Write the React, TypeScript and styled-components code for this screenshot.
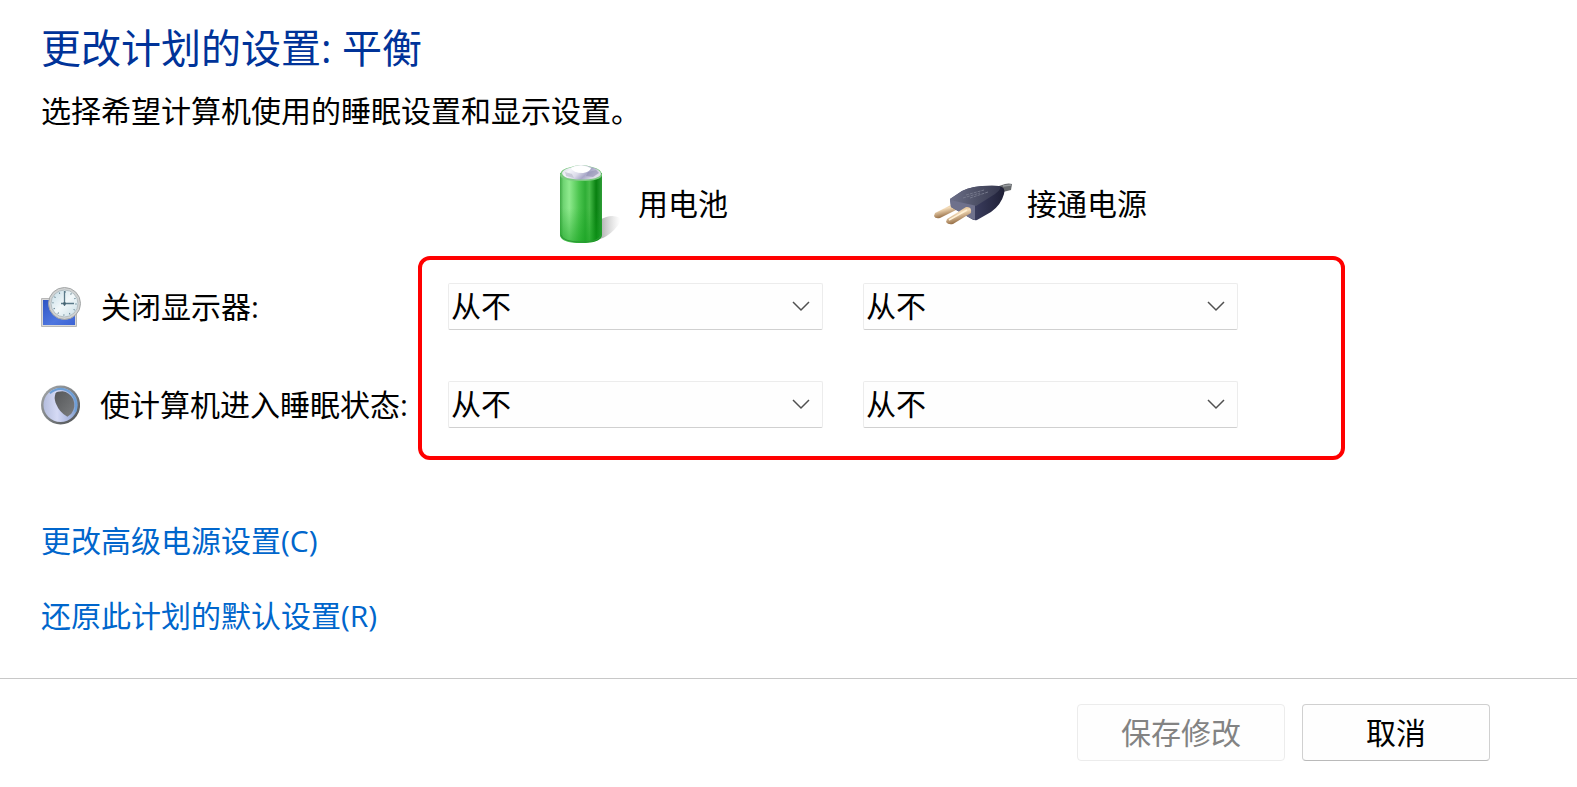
import React from 'react';
import styled, { createGlobalStyle } from 'styled-components';

const GlobalStyle = createGlobalStyle`
  *, *::before, *::after { box-sizing: border-box; }
  body {
    margin: 0;
    background: #ffffff;
    color: #000000;
    font-family: "Open Sans", "Noto Sans CJK SC", sans-serif;
    font-size: 30px;
    line-height: 40px;
  }
`;

const Page = styled.div`
  min-height: 100vh;
  display: flex;
  flex-direction: column;
`;

const Content = styled.main`
  padding: 22px 41px 42px;
  border-bottom: 1px solid #c8c8c8;
`;

const Title = styled.h1`
  margin: 0 0 17px;
  color: #003399;
  font-size: 40px;
  font-weight: 400;
  line-height: 52px;
`;

const Intro = styled.p`
  margin: 0 0 33px;
`;

const PlanGrid = styled.div`
  display: grid;
  grid-template-columns: 367px minmax(0, 375px) minmax(0, 375px);
  grid-template-rows: 68px 47px 47px;
  column-gap: 40px;
  row-gap: 51px;
  align-items: center;
`;

const SourceHeader = styled.div<{ $column: number; $indent: number }>`
  grid-row: 1;
  grid-column: ${(p) => p.$column};
  align-self: start;
  display: flex;
  align-items: center;
  gap: 14px;
  padding-left: ${(p) => p.$indent}px;
  white-space: nowrap;
`;

const RowLabel = styled.div<{ $row: number }>`
  grid-row: ${(p) => p.$row};
  grid-column: 1;
  display: flex;
  align-items: center;
  gap: 20px;
  white-space: nowrap;
`;

const Highlight = styled.div`
  grid-row: 2 / 4;
  grid-column: 2 / 4;
  align-self: stretch;
  margin: -27px -107px -32px -30px;
  border: 4px solid #ff0000;
  border-radius: 12px;
  pointer-events: none;
`;

const SelectBox = styled.div<{ $row: number; $column: number }>`
  grid-row: ${(p) => p.$row};
  grid-column: ${(p) => p.$column};
  position: relative;
  height: 47px;
`;

const Select = styled.select`
  appearance: none;
  width: 100%;
  height: 100%;
  padding: 0 48px 1px 2px;
  border: 1px solid #ececec;
  border-bottom-color: #d0d0d0;
  border-radius: 2px;
  background: #fefefe;
  color: inherit;
  font: inherit;
`;

const Chevron = styled.svg`
  position: absolute;
  right: 13px;
  top: 18px;
  pointer-events: none;
`;

const Links = styled.nav`
  display: flex;
  flex-direction: column;
  align-items: flex-start;
  gap: 35px;
  margin-top: 93px;
`;

const PlanLink = styled.a`
  color: #0066cc;
  text-decoration: none;
`;

const Footer = styled.footer`
  flex: 1;
  display: flex;
  justify-content: flex-end;
  align-items: flex-start;
  gap: 17px;
  padding: 25px 87px 25px 41px;
`;

const Button = styled.button<{ $width: number }>`
  width: ${(p) => p.$width}px;
  height: 57px;
  padding: 0;
  border: 1px solid #d0d0d0;
  border-bottom-color: #bababa;
  border-radius: 4px;
  background: #fefefe;
  color: #000000;
  font: inherit;
  &:disabled {
    border-color: #ececec;
    color: #838383;
  }
`;

const BatteryIcon = () => (
  <svg width="80" height="80" viewBox="0 0 80 80" aria-hidden="true">
    <defs>
      <linearGradient id="bat-body" x1="0" x2="1">
        <stop offset="0" stopColor="#3fa845" />
        <stop offset="0.08" stopColor="#6fd472" />
        <stop offset="0.22" stopColor="#8fea8e" />
        <stop offset="0.45" stopColor="#4cc54f" />
        <stop offset="0.6" stopColor="#2fae36" />
        <stop offset="0.7" stopColor="#48bd4a" />
        <stop offset="0.86" stopColor="#088010" />
        <stop offset="1" stopColor="#2d9d36" />
      </linearGradient>
      <linearGradient id="bat-shade" x1="0" x2="0" y1="0" y2="1">
        <stop offset="0.5" stopColor="#12a01c" stopOpacity="0" />
        <stop offset="1" stopColor="#12a01c" stopOpacity="0.55" />
      </linearGradient>
      <linearGradient id="bat-cap" x1="0" x2="1" y1="0" y2="0.4">
        <stop offset="0" stopColor="#c9cfd6" />
        <stop offset="0.3" stopColor="#f4f4fa" />
        <stop offset="0.55" stopColor="#dcdcea" />
        <stop offset="0.75" stopColor="#a9a8c8" />
        <stop offset="1" stopColor="#dddde8" />
      </linearGradient>
      <linearGradient id="bat-shadow" x1="0" x2="1">
        <stop offset="0" stopColor="#777" stopOpacity="0.6" />
        <stop offset="1" stopColor="#aaa" stopOpacity="0" />
      </linearGradient>
    </defs>
    <path d="M56 56Q67 49 76 54Q78 58 70 66Q63 73 56 75Z" fill="url(#bat-shadow)" />
    <path d="M16 9V71Q17 79 37 79Q57 79 58 71V9Z" fill="url(#bat-body)" />
    <path d="M16 9V71Q17 79 37 79Q57 79 58 71V9Z" fill="url(#bat-shade)" />
    <path d="M17 71Q19 78 37 78Q55 78 57 71" fill="none" stroke="#2c9836" strokeWidth="1" />
    <path d="M16 11Q16 5 27 3Q37 -1 48 3Q58 5 58 11Q57 17 37 17Q17 17 16 11Z" fill="#7ccb80" />
    <path d="M18 9Q19 5 27 3.500Q36 -1 47 3Q56 5 57 10Q55 15.500 37 15.500Q19 15.500 18 9Z" fill="url(#bat-cap)" />
    <path d="M27 4Q37 -1 47 4Q46 8 39 9Q29 9 27 4Z" fill="#ffffff" />
    <path d="M44 8L52 6L55 9L49 13L42 12Z" fill="#8f8db2" opacity="0.6" />
    <path d="M21 8L28 10L30 14L22 12Z" fill="#b6b8c8" opacity="0.6" />
  </svg>
);

const PlugIcon = () => (
  <svg width="80" height="80" viewBox="0 0 80 80" aria-hidden="true">
    <defs>
      <linearGradient id="plug-top" x1="0" x2="1">
        <stop offset="0" stopColor="#6c6f88" />
        <stop offset="0.5" stopColor="#505369" />
        <stop offset="1" stopColor="#36384f" />
      </linearGradient>
      <linearGradient id="plug-side" x1="0" x2="1">
        <stop offset="0" stopColor="#55587a" />
        <stop offset="0.5" stopColor="#383a5a" />
        <stop offset="1" stopColor="#1f2036" />
      </linearGradient>
      <linearGradient id="plug-pin" x1="0" x2="0.4" y1="0" y2="1">
        <stop offset="0" stopColor="#b98b57" />
        <stop offset="0.45" stopColor="#f5ddba" />
        <stop offset="1" stopColor="#8a6037" />
      </linearGradient>
    </defs>
    <path d="M66 22L72 20Q76 19 79 20L78 26L70 28Z" fill="#66696c" />
    <path d="M70 22L78 21" stroke="#999da0" strokeWidth="1.500" />
    <path d="M2 49L22 39L27 44L7 54Q2 55 1 52Z" fill="url(#plug-pin)" />
    <path d="M17 35L29 27Q40 21 66 22Q73 23 71 30Q68 41 58 48L44 56Q41 57 37 54L18 43Z" fill="url(#plug-side)" />
    <path d="M17 35L29 27Q40 21 66 22Q70 24 62 30L43 42L18 38Z" fill="url(#plug-top)" />
    <path d="M17 36L42 41.500V56L37 54L18 43Z" fill="#6f718c" />
    <path d="M33 31L51 26M37 34L55 28M30 34L47 29" stroke="#74778a" strokeWidth="1" strokeDasharray="3 1" />
    <path d="M14 55L33 43Q39 42 38 49L20 60Q15 61 13 58Z" fill="url(#plug-pin)" />
    <path d="M16 56L34 46" stroke="#fff0d5" strokeWidth="1.500" />
  </svg>
);

const DisplayClockIcon = () => (
  <svg width="40" height="40" viewBox="0 0 40 40" aria-hidden="true">
    <defs>
      <linearGradient id="clk-screen" x1="0" x2="1" y1="0" y2="1">
        <stop offset="0" stopColor="#2f55c4" />
        <stop offset="0.6" stopColor="#4e76df" />
        <stop offset="1" stopColor="#3c63d4" />
      </linearGradient>
      <linearGradient id="clk-face" x1="0" x2="1" y1="0" y2="1">
        <stop offset="0" stopColor="#c3dbe5" />
        <stop offset="0.5" stopColor="#f2f8fa" />
        <stop offset="1" stopColor="#c8dde5" />
      </linearGradient>
    </defs>
    <path d="M.5 11.500H35.500V39.500H.5Z" fill="#d8d8d8" stroke="#b8b8b8" />
    <path d="M2 13H34V38H2Z" fill="url(#clk-screen)" />
    <circle cx="23.500" cy="16.500" r="16" fill="#d0d2d2" stroke="#a3a6a7" />
    <circle cx="23.500" cy="16.500" r="13.500" fill="url(#clk-face)" stroke="#b4bec2" />
    <circle cx="23.500" cy="16.500" r="11.500" fill="none" stroke="#6d8a97" strokeWidth="1.500" strokeDasharray="1 5.021" />
    <path d="M23.500 4V19M20 16.500H33" stroke="#5a7988" strokeWidth="1.300" />
    <circle cx="23.500" cy="16.500" r="1.500" fill="#486674" />
  </svg>
);

const SleepIcon = () => (
  <svg width="40" height="40" viewBox="0 0 40 40" aria-hidden="true">
    <defs>
      <linearGradient id="moon-rim" x1="0" x2="1" y1="0" y2="1">
        <stop offset="0" stopColor="#a8abad" />
        <stop offset="0.5" stopColor="#7d8184" />
        <stop offset="1" stopColor="#494c4e" />
      </linearGradient>
      <linearGradient id="moon-light" x1="0" x2="1">
        <stop offset="0" stopColor="#b4bddd" />
        <stop offset="0.4" stopColor="#d5daf5" />
        <stop offset="0.7" stopColor="#b0bbe3" />
        <stop offset="1" stopColor="#7d9fd0" />
      </linearGradient>
      <linearGradient id="moon-dark" x1="0" x2="1" y1="0" y2="1">
        <stop offset="0" stopColor="#555759" />
        <stop offset="1" stopColor="#7b7d7f" />
      </linearGradient>
    </defs>
    <circle cx="20" cy="20" r="20" fill="url(#moon-rim)" />
    <circle cx="20" cy="20" r="17.500" fill="url(#moon-light)" />
    <path d="M9 8Q20 -1 31 8Q38 16 35 27" fill="none" stroke="#6d9fd6" strokeWidth="2" />
    <path d="M15 8Q16 6 22 6Q29 7 33 14Q36 22 31 29L27 32Q19 28 15 18Q13 12 15 8Z" fill="url(#moon-dark)" />
  </svg>
);

const sources = [
  { id: 'battery', name: '用电池', indent: 96, Icon: BatteryIcon },
  { id: 'plugged', name: '接通电源', indent: 70, Icon: PlugIcon },
];

const settings = [
  { id: 'display', name: '关闭显示器:', Icon: DisplayClockIcon },
  { id: 'sleep', name: '使计算机进入睡眠状态:', Icon: SleepIcon },
];

export default function App() {
  return (
    <Page>
      <GlobalStyle />
      <Content>
        <Title>更改计划的设置: 平衡</Title>
        <Intro>选择希望计算机使用的睡眠设置和显示设置。</Intro>
        <PlanGrid>
          {sources.map(({ id, name, indent, Icon }, i) => (
            <SourceHeader key={id} $column={i + 2} $indent={indent}>
              <Icon />
              <span id={id}>{name}</span>
            </SourceHeader>
          ))}
          {settings.map(({ id, name, Icon }, r) => (
            <React.Fragment key={id}>
              <RowLabel $row={r + 2}>
                <Icon />
                <label id={id} htmlFor={`${id}-battery`}>{name}</label>
              </RowLabel>
              {sources.map((source, c) => (
                <SelectBox key={source.id} $row={r + 2} $column={c + 2}>
                  <Select id={`${id}-${source.id}`} aria-labelledby={`${id} ${source.id}`}>
                    <option>从不</option>
                  </Select>
                  <Chevron width="18" height="11" viewBox="0 0 18 11" aria-hidden="true">
                    <path d="M1 1L9 9L17 1" fill="none" stroke="#505050" strokeWidth="1.500" />
                  </Chevron>
                </SelectBox>
              ))}
            </React.Fragment>
          ))}
          <Highlight />
        </PlanGrid>
        <Links>
          <PlanLink href="#advanced">更改高级电源设置(C)</PlanLink>
          <PlanLink href="#restore">还原此计划的默认设置(R)</PlanLink>
        </Links>
      </Content>
      <Footer>
        <Button type="button" disabled $width={208}>保存修改</Button>
        <Button type="button" $width={188}>取消</Button>
      </Footer>
    </Page>
  );
}
